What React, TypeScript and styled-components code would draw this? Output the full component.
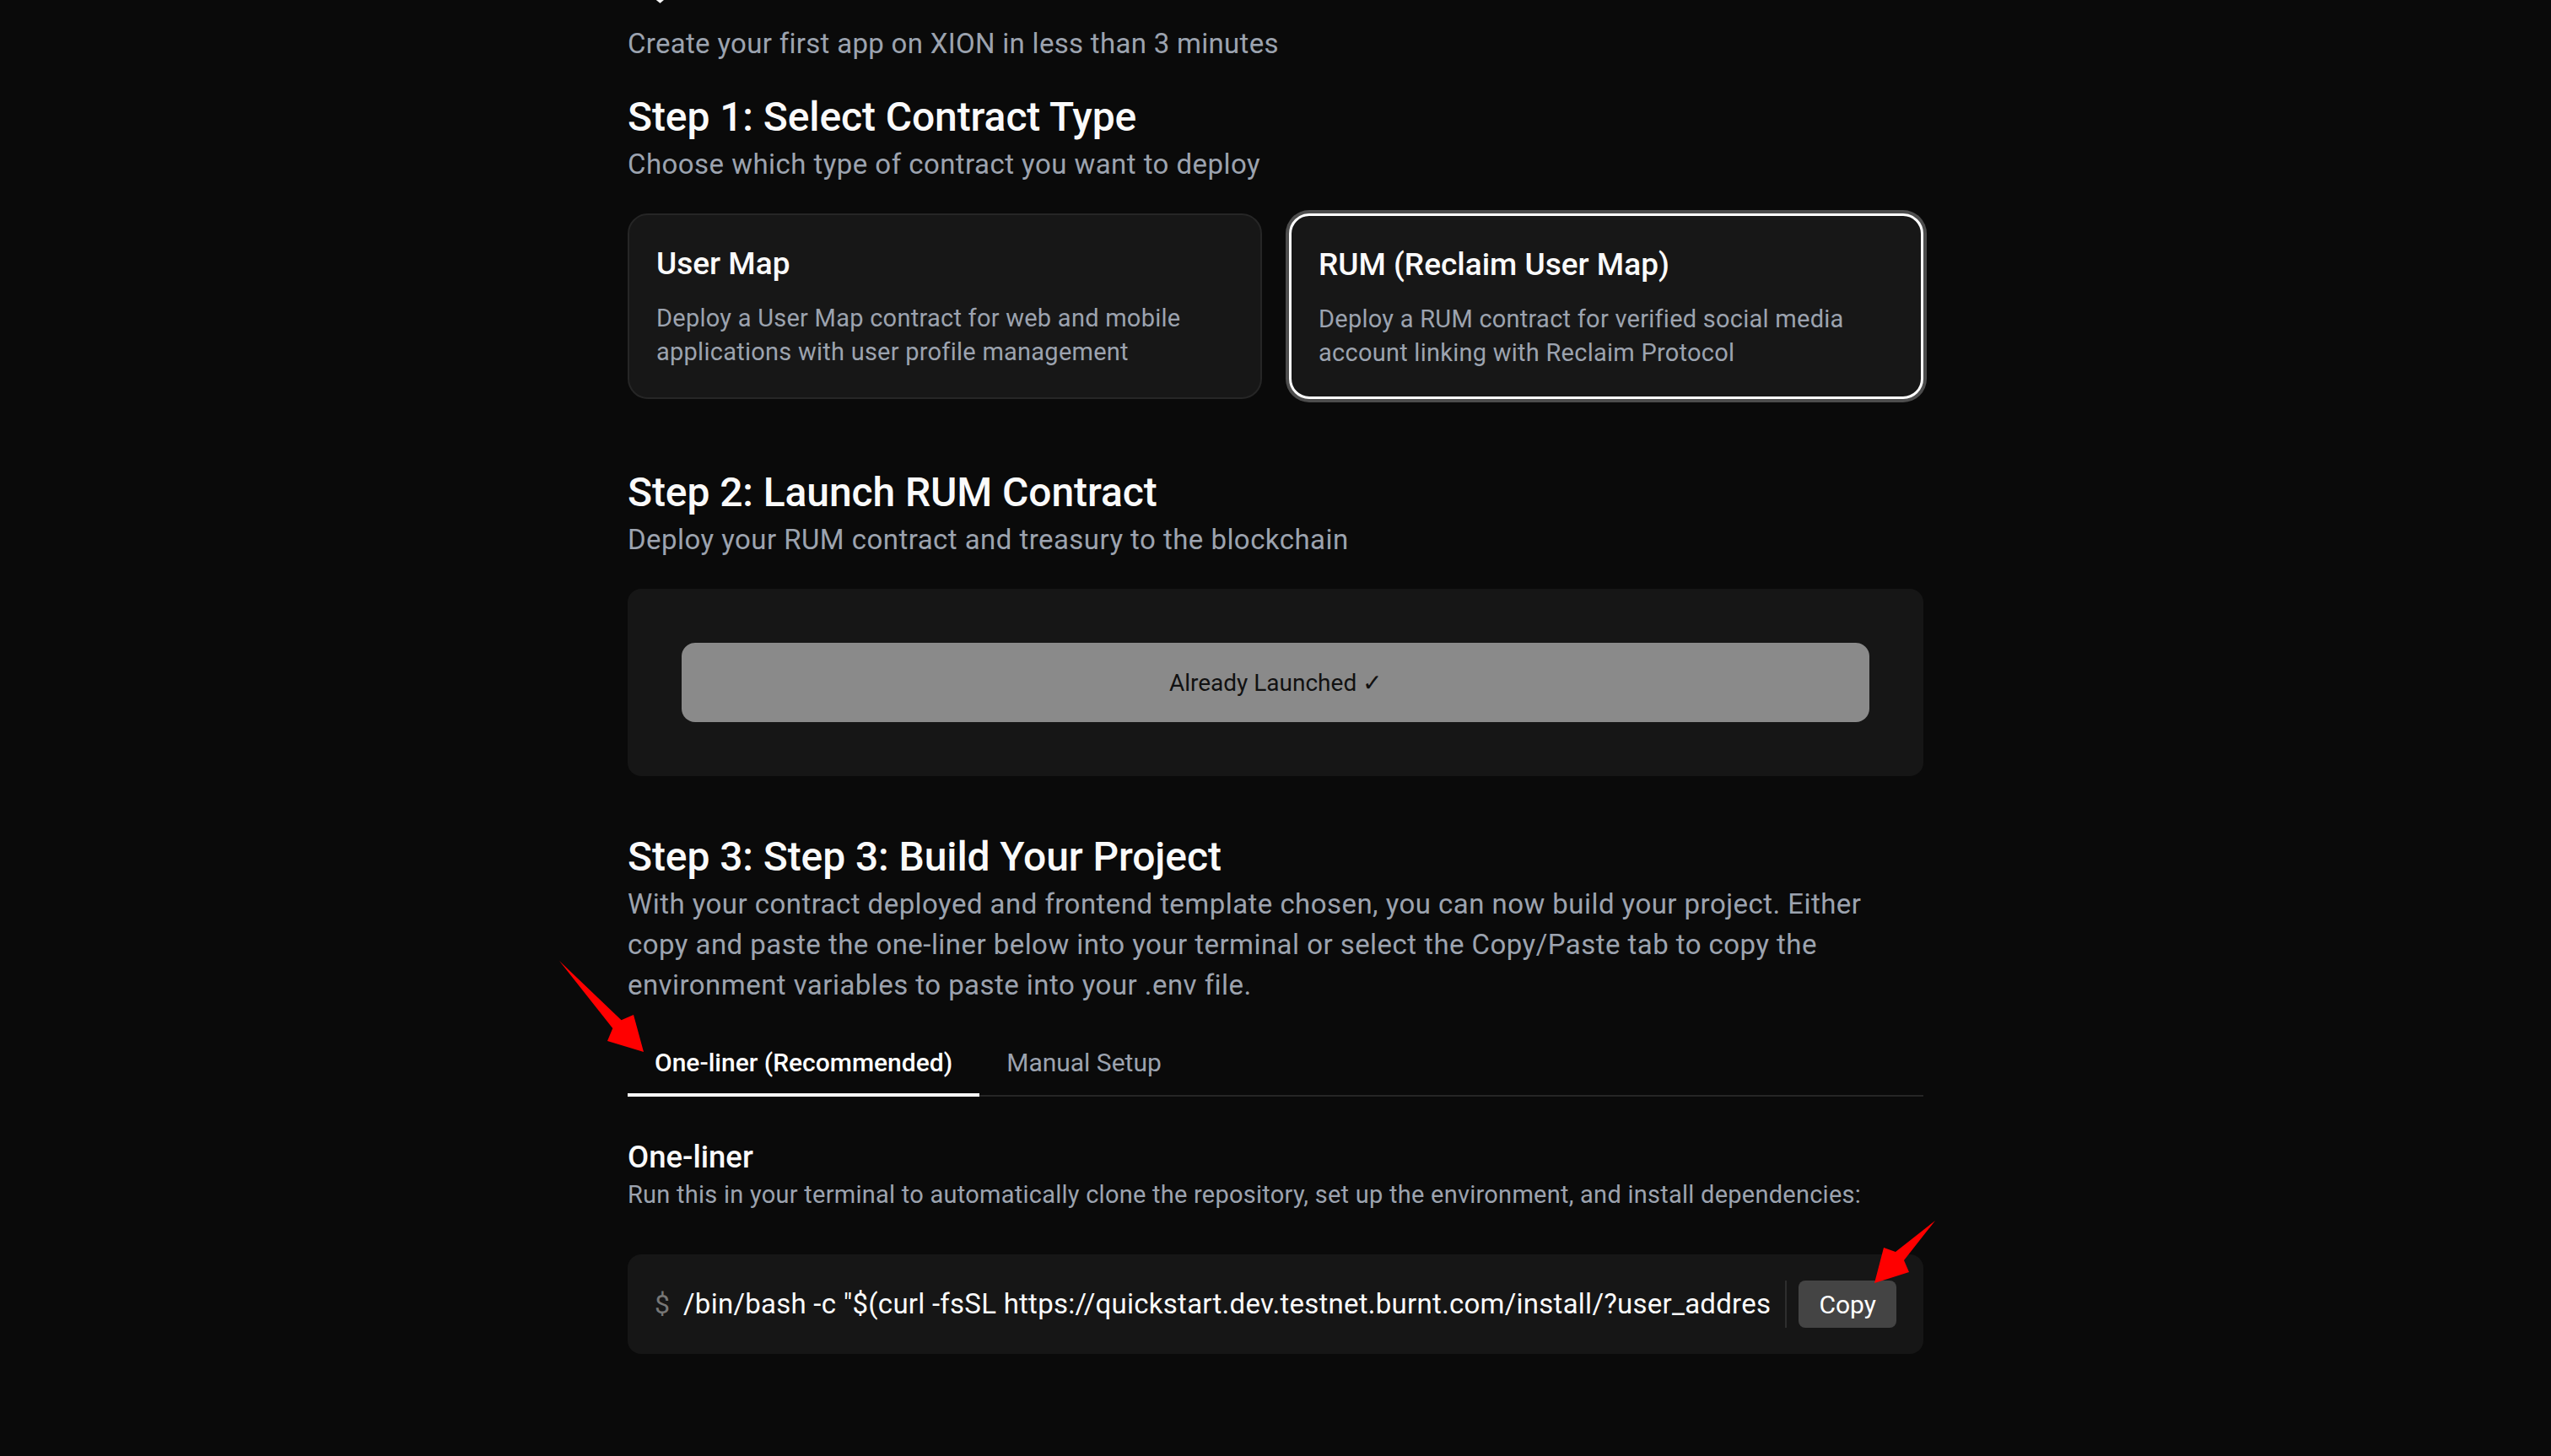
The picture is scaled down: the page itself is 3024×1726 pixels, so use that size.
import React from "react";
import styled, { createGlobalStyle } from "styled-components";

const Global = createGlobalStyle`
  html, body {
    margin: 0;
    padding: 0;
    background: #0a0a0a;
  }
  body {
    font-family: Roboto, "Liberation Sans", Arial, sans-serif;
    color: #f5f5f5;
    overflow: hidden;
  }
  * { box-sizing: border-box; }
`;

const Page = styled.div`
  position: relative;
  width: 100%;
  min-height: 1726px;
`;

const Container = styled.main`
  width: 1536px;
  margin: 0 auto;
  display: flex;
  flex-direction: column;
`;

const Title = styled.h1`
  margin: -64px 0 0;
  font-size: 70px;
  line-height: 70px;
  font-weight: 700;
  color: #f5f5f5;
`;

const Intro = styled.p`
  margin: 22px 0 0;
  font-size: 33px;
  line-height: 48px;
  letter-spacing: 0.3px;
  color: #9ca3af;
`;

const Section = styled.section<{ $top: number }>`
  margin-top: ${(p) => p.$top}px;
  display: flex;
  flex-direction: column;
`;

const StepHeading = styled.h2`
  margin: 0;
  font-size: 48px;
  line-height: 64px;
  font-weight: 500;
  letter-spacing: -0.1px;
  color: #fafafa;
`;

const StepDesc = styled.p`
  margin: 0;
  font-size: 33px;
  line-height: 48px;
  letter-spacing: 0.45px;
  color: #9ca3af;
`;

const CardGrid = styled.div`
  margin-top: 34px;
  display: grid;
  grid-template-columns: 1fr 1fr;
  gap: 32px;
`;

const Card = styled.div<{ $selected?: boolean }>`
  background: #171717;
  border-radius: 24px;
  padding: 30px 32px 32px;
  border: ${(p) => (p.$selected ? "3px solid #ffffff" : "2px solid #262626")};
  box-shadow: ${(p) => (p.$selected ? "0 0 0 4px #4d4d4d" : "none")};
  display: flex;
  flex-direction: column;
  gap: 16px;
`;

const CardTitle = styled.h3`
  margin: 0;
  font-size: 37px;
  line-height: 56px;
  font-weight: 500;
  color: #fafafa;
`;

const CardDesc = styled.p`
  margin: 0;
  font-size: 29px;
  line-height: 40px;
  letter-spacing: 0.25px;
  color: #9ca3af;
`;

const Panel = styled.div`
  margin-top: 34px;
  background: #161616;
  border-radius: 16px;
  padding: 64px;
`;

const LaunchedButton = styled.button`
  width: 100%;
  height: 94px;
  border: none;
  border-radius: 16px;
  background: #8a8a8a;
  color: #111111;
  font-family: Roboto, "Liberation Sans", sans-serif;
  font-size: 28px;
  cursor: default;
`;

const TabList = styled.div`
  margin-top: 28px;
  display: flex;
  box-shadow: inset 0 -2px 0 #262626;
`;

const Tab = styled.button<{ $active?: boolean }>`
  background: none;
  border: none;
  border-bottom: 4px solid ${(p) => (p.$active ? "#ffffff" : "transparent")};
  padding: 16px 32px 12px;
  font-family: Roboto, "Liberation Sans", sans-serif;
  font-size: 30px;
  line-height: 48px;
  font-weight: ${(p) => (p.$active ? 500 : 400)};
  color: ${(p) => (p.$active ? "#ffffff" : "#9ca3af")};
  cursor: pointer;
`;

const TabContent = styled.div`
  padding-top: 48px;
  display: flex;
  flex-direction: column;
`;

const SubHeading = styled.h4`
  margin: 0;
  font-size: 36.5px;
  line-height: 48px;
  font-weight: 500;
  color: #fafafa;
`;

const SubDesc = styled.p`
  margin: 0;
  font-size: 29px;
  line-height: 40px;
  letter-spacing: 0.25px;
  color: #9ca3af;
`;

const CodeBox = styled.div`
  margin-top: 51px;
  background: #161616;
  border-radius: 16px;
  padding: 31px 32px;
  display: flex;
  align-items: center;
`;

const Prompt = styled.span`
  color: #777777;
  font-size: 32px;
  line-height: 48px;
  margin-right: 16px;
`;

const Command = styled.code`
  flex: 1;
  min-width: 0;
  overflow: hidden;
  white-space: nowrap;
  font-family: Roboto, "Liberation Sans", sans-serif;
  font-size: 33px;
  line-height: 48px;
  letter-spacing: 0.25px;
  color: #fafafa;
`;

const Separator = styled.div`
  width: 2px;
  height: 56px;
  background: #2e2e2e;
  margin: 0 14px 0 16px;
`;

const CopyButton = styled.button`
  height: 56px;
  padding: 0 24px;
  border: none;
  border-radius: 8px;
  background: #444444;
  color: #ffffff;
  font-family: Roboto, "Liberation Sans", sans-serif;
  font-size: 30px;
  cursor: pointer;
`;

const Annotations = styled.svg`
  position: absolute;
  top: 0;
  left: 0;
  pointer-events: none;
`;

export default function App() {
  const command =
    '/bin/bash -c "$(curl -fsSL https://quickstart.dev.testnet.burnt.com/install/?user_address=xion1example&contract=rum)"';
  return (
    <Page>
      <Global />
      <Container>
        <Title>Quickstart</Title>
        <Intro>Create your first app on XION in less than 3 minutes</Intro>

        <Section $top={31}>
          <StepHeading>Step 1: Select Contract Type</StepHeading>
          <StepDesc>Choose which type of contract you want to deploy</StepDesc>
          <CardGrid>
            <Card>
              <CardTitle>User Map</CardTitle>
              <CardDesc>
                Deploy a User Map contract for web and mobile applications with user profile
                management
              </CardDesc>
            </Card>
            <Card $selected>
              <CardTitle>RUM (Reclaim User Map)</CardTitle>
              <CardDesc>
                Deploy a RUM contract for verified social media account linking with Reclaim
                Protocol
              </CardDesc>
            </Card>
          </CardGrid>
        </Section>

        <Section $top={79}>
          <StepHeading>Step 2: Launch RUM Contract</StepHeading>
          <StepDesc>Deploy your RUM contract and treasury to the blockchain</StepDesc>
          <Panel>
            <LaunchedButton>Already Launched ✓</LaunchedButton>
          </Panel>
        </Section>

        <Section $top={64}>
          <StepHeading>Step 3: Step 3: Build Your Project</StepHeading>
          <StepDesc>
            With your contract deployed and frontend template chosen, you can now build your
            project. Either copy and paste the one-liner below into your terminal or select the
            Copy/Paste tab to copy the environment variables to paste into your .env file.
          </StepDesc>
          <TabList>
            <Tab $active>One-liner (Recommended)</Tab>
            <Tab>Manual Setup</Tab>
          </TabList>
          <TabContent>
            <SubHeading>One-liner</SubHeading>
            <SubDesc>
              Run this in your terminal to automatically clone the repository, set up the
              environment, and install dependencies:
            </SubDesc>
            <CodeBox>
              <Prompt>$</Prompt>
              <Command>{command}</Command>
              <Separator />
              <CopyButton>Copy</CopyButton>
            </CodeBox>
          </TabContent>
        </Section>
      </Container>

      <Annotations width={3024} height={1726} viewBox="0 0 3024 1726">
        <polygon
          points="663,1139 736.5,1209.3 751,1203 763,1247 720,1234 726.3,1218.9"
          fill="#ff0000"
        />
        <polygon
          points="2294,1447 2257,1494 2263,1508 2222,1521 2233,1479 2247,1484"
          fill="#ff0000"
        />
      </Annotations>
    </Page>
  );
}
